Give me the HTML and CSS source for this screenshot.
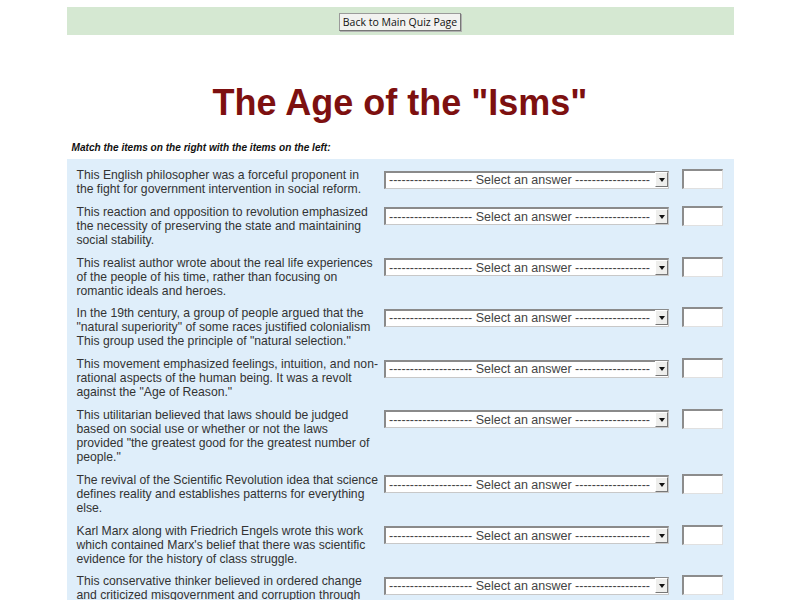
FILE: index.html
```html
<!DOCTYPE html>
<html lang="en">
<head>
<meta charset="utf-8">
<title>The Age of the "Isms"</title>
<link rel="stylesheet" href="styles.css">
</head>
<body>
<div class="page">
  <div class="topbar">
    <button class="back-btn" type="button">Back to Main Quiz Page</button>
  </div>
  <h1 class="title">The Age of the "Isms"</h1>
  <p class="instruction">Match the items on the right with the items on the left:</p>
  <div class="quiz">
    <div class="row">
      <div class="q">This English philosopher was a forceful proponent in<br>the fight for government intervention in social reform.</div>
      <div class="sel"><select><option>-------------------- Select an answer ------------------</option></select><span class="arrow"></span></div>
      <input class="ans" type="text">
    </div>
    <div class="row">
      <div class="q">This reaction and opposition to revolution emphasized<br>the necessity of preserving the state and maintaining<br>social stability.</div>
      <div class="sel"><select><option>-------------------- Select an answer ------------------</option></select><span class="arrow"></span></div>
      <input class="ans" type="text">
    </div>
    <div class="row">
      <div class="q">This realist author wrote about the real life experiences<br>of the people of his time, rather than focusing on<br>romantic ideals and heroes.</div>
      <div class="sel"><select><option>-------------------- Select an answer ------------------</option></select><span class="arrow"></span></div>
      <input class="ans" type="text">
    </div>
    <div class="row">
      <div class="q">In the 19th century, a group of people argued that the<br>"natural superiority" of some races justified colonialism<br>This group used the principle of "natural selection."</div>
      <div class="sel"><select><option>-------------------- Select an answer ------------------</option></select><span class="arrow"></span></div>
      <input class="ans" type="text">
    </div>
    <div class="row">
      <div class="q">This movement emphasized feelings, intuition, and non-<br>rational aspects of the human being. It was a revolt<br>against the "Age of Reason."</div>
      <div class="sel"><select><option>-------------------- Select an answer ------------------</option></select><span class="arrow"></span></div>
      <input class="ans" type="text">
    </div>
    <div class="row">
      <div class="q">This utilitarian believed that laws should be judged<br>based on social use or whether or not the laws<br>provided "the greatest good for the greatest number of<br>people."</div>
      <div class="sel"><select><option>-------------------- Select an answer ------------------</option></select><span class="arrow"></span></div>
      <input class="ans" type="text">
    </div>
    <div class="row">
      <div class="q">The revival of the Scientific Revolution idea that science<br>defines reality and establishes patterns for everything<br>else.</div>
      <div class="sel"><select><option>-------------------- Select an answer ------------------</option></select><span class="arrow"></span></div>
      <input class="ans" type="text">
    </div>
    <div class="row">
      <div class="q">Karl Marx along with Friedrich Engels wrote this work<br>which contained Marx's belief that there was scientific<br>evidence for the history of class struggle.</div>
      <div class="sel"><select><option>-------------------- Select an answer ------------------</option></select><span class="arrow"></span></div>
      <input class="ans" type="text">
    </div>
    <div class="row">
      <div class="q">This conservative thinker believed in ordered change<br>and criticized misgovernment and corruption through<br>the use of reason and tradition.</div>
      <div class="sel"><select><option>-------------------- Select an answer ------------------</option></select><span class="arrow"></span></div>
      <input class="ans" type="text">
    </div>
  </div>
</div>
</body>
</html>
```
FILE: styles.css
```css
html, body {
  margin: 0;
  padding: 0;
  background: #ffffff;
}
body {
  font-family: "Liberation Sans", Arial, sans-serif;
  color: #333333;
}
.page {
  width: 667px;
  margin: 0 auto;
  padding-top: 7px;
}
.topbar {
  background: #d5e8d2;
  height: 28px;
  display: flex;
  align-items: center;
  justify-content: center;
}
.back-btn {
  font-family: "Open Sans", "DejaVu Sans", sans-serif;
  font-size: 10.5px;
  color: #111;
  background: #f2f2f0;
  border: 1px solid #9a9a9a;
  border-right-color: #777;
  border-bottom-color: #777;
  box-shadow: 1px 1px 0 #b0b0b0;
  padding: 0 3px;
  height: 18px;
  line-height: 16px;
  margin-top: 1px;
}
.title {
  margin: 48px 0 0;
  text-align: center;
  font-size: 36px;
  line-height: 40px;
  font-weight: bold;
  color: #7d1010;
}
.instruction {
  margin: 19px 0 0 5px;
  font-size: 10.1px;
  line-height: 12px;
  font-weight: bold;
  font-style: italic;
  color: #111;
}
.quiz {
  margin-top: 5px;
  background: #dfeefa;
  padding: 9px 11px 20px 10px;
  display: flex;
  flex-direction: column;
  gap: 8.8px;
}
.row {
  display: grid;
  grid-template-columns: 301px 285px 41px;
  column-gap: 6px;
  align-items: start;
}
.q {
  font-size: 12.2px;
  line-height: 14px;
  color: #333;
  white-space: nowrap;
}
.sel {
  position: relative;
  margin-top: 2px;
  height: 18px;
}
.sel select {
  appearance: none;
  -webkit-appearance: none;
  width: 285px;
  height: 18px;
  margin: 0;
  padding: 0 16px 0 2px;
  font-family: "Liberation Sans", Arial, sans-serif;
  font-size: 12.5px;
  color: #444;
  background: #ffffff;
  border: 1px solid #c8c8c8;
  border-top: 2px solid #8a8a8a;
  border-left: 2px solid #8a8a8a;
  box-sizing: border-box;
  border-radius: 0;
  text-align: center;
}
.arrow {
  position: absolute;
  right: 1px;
  top: 2px;
  width: 13px;
  height: 15px;
  box-sizing: border-box;
  background: #eeeeec;
  border: 1px solid #fff;
  border-right-color: #777;
  border-bottom-color: #777;
}
.arrow::after {
  content: "";
  position: absolute;
  left: 3px;
  top: 5px;
  border-left: 3px solid transparent;
  border-right: 3px solid transparent;
  border-top: 4px solid #111;
}
.ans {
  margin: 1px 0 0 7px;
  width: 41px;
  height: 20px;
  box-sizing: border-box;
  padding: 0 2px;
  background: #fff;
  border: 1px solid #e0e0e0;
  border-top: 2px solid #8c8c8c;
  border-left: 2px solid #8c8c8c;
  border-radius: 0;
}
```
